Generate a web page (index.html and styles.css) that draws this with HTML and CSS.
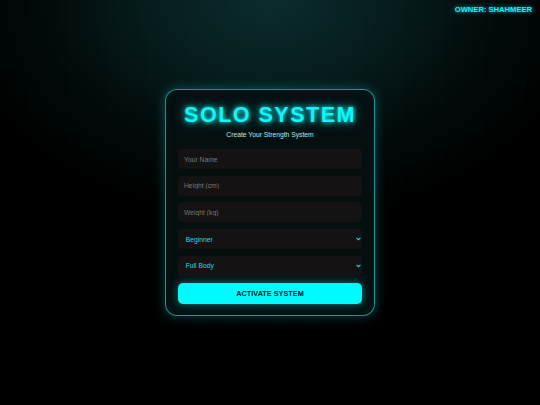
FILE: index.html
```html
<!DOCTYPE html>
<html lang="en">
<head>
<meta charset="utf-8">
<title>Solo System</title>
<link rel="stylesheet" href="styles.css">
</head>
<body>
<div class="owner">OWNER: SHAHMEER</div>
<main class="stage">
  <section class="card">
    <h1 class="title">SOLO SYSTEM</h1>
    <p class="subtitle">Create Your Strength System</p>
    <div class="fields">
      <input class="field" type="text" placeholder="Your Name">
      <input class="field" type="text" placeholder="Height (cm)">
      <input class="field" type="text" placeholder="Weight (kg)">
      <div class="field select"><span>Beginner</span><svg class="chev" width="5" height="4" viewBox="0 0 5 4"><polyline points="0.6,0.8 2.5,2.7 4.4,0.8" fill="none" stroke="#1fdde4" stroke-width="1.1"/></svg></div>
      <div class="field select"><span>Full Body</span><svg class="chev" width="5" height="4" viewBox="0 0 5 4"><polyline points="0.6,0.8 2.5,2.7 4.4,0.8" fill="none" stroke="#1fdde4" stroke-width="1.1"/></svg></div>
      <button class="activate">ACTIVATE SYSTEM</button>
    </div>
  </section>
</main>
</body>
</html>
```

FILE: styles.css
```css
* { box-sizing: border-box; }
html, body { margin: 0; padding: 0; }
body {
  width: 540px;
  height: 405px;
  overflow: hidden;
  font-family: "Liberation Sans", Arial, sans-serif;
  background-color: #000;
  background-image:
    repeating-linear-gradient(90deg, rgba(0,255,255,0.008) 0 1px, transparent 1px 10px),
    radial-gradient(ellipse 320px 220px at 50% 0%, #0b2c2c 0%, #061b1b 40%, #020909 72%, #000 100%);
  position: relative;
}
.owner {
  position: absolute;
  top: 5px;
  right: 8px;
  font-size: 7.6px;
  line-height: 10px;
  font-weight: bold;
  color: #1ff0f4;
  text-shadow: 0 0 4px rgba(0,255,255,0.8);
}
.stage {
  height: 405px;
  display: flex;
  align-items: center;
  justify-content: center;
}
.card {
  width: 210px;
  border: 1px solid rgba(40,190,190,0.75);
  border-radius: 12px;
  background: rgba(6,16,17,0.96);
  box-shadow: 0 0 12px rgba(0,255,255,0.28), inset 0 0 8px rgba(0,255,255,0.05);
  padding: 12px 12px 11.4px;
  display: flex;
  flex-direction: column;
  align-items: stretch;
}
.title {
  margin: 0;
  text-align: center;
  font-size: 21.5px;
  line-height: 26px;
  font-weight: bold;
  letter-spacing: 1.5px;
  color: #12f4f8;
  text-shadow: 0 0 5px rgba(0,255,255,0.95), 0 0 12px rgba(0,255,255,0.6);
}
.subtitle {
  margin: 2px 0 0;
  text-align: center;
  font-size: 6.75px;
  line-height: 9px;
  color: #b4e8e8;
}
.fields {
  margin-top: 10.5px;
  display: flex;
  flex-direction: column;
  gap: 6.7px;
}
.field {
  display: block;
  width: 100%;
  height: 20px;
  margin: 0;
  border: none;
  outline: none;
  border-radius: 4px;
  background: #141213;
  padding: 0 6px;
  font-family: "Liberation Sans", Arial, sans-serif;
  font-size: 6.75px;
  color: #1fdde4;
}
.field::placeholder { color: #7a7a7a; }
.select {
  display: flex;
  align-items: center;
  justify-content: space-between;
  padding: 0 1px 0 7.7px;
  color: #1fdde4;
}
.chev { display: block; }
.activate {
  display: block;
  width: 100%;
  height: 21.5px;
  margin: 0;
  border: none;
  border-radius: 5px;
  background: #00fbff;
  color: #03191b;
  font-family: "Liberation Sans", Arial, sans-serif;
  font-size: 7.3px;
  font-weight: bold;
  box-shadow: 0 0 8px rgba(0,255,255,0.45);
  padding: 0;
}
```
